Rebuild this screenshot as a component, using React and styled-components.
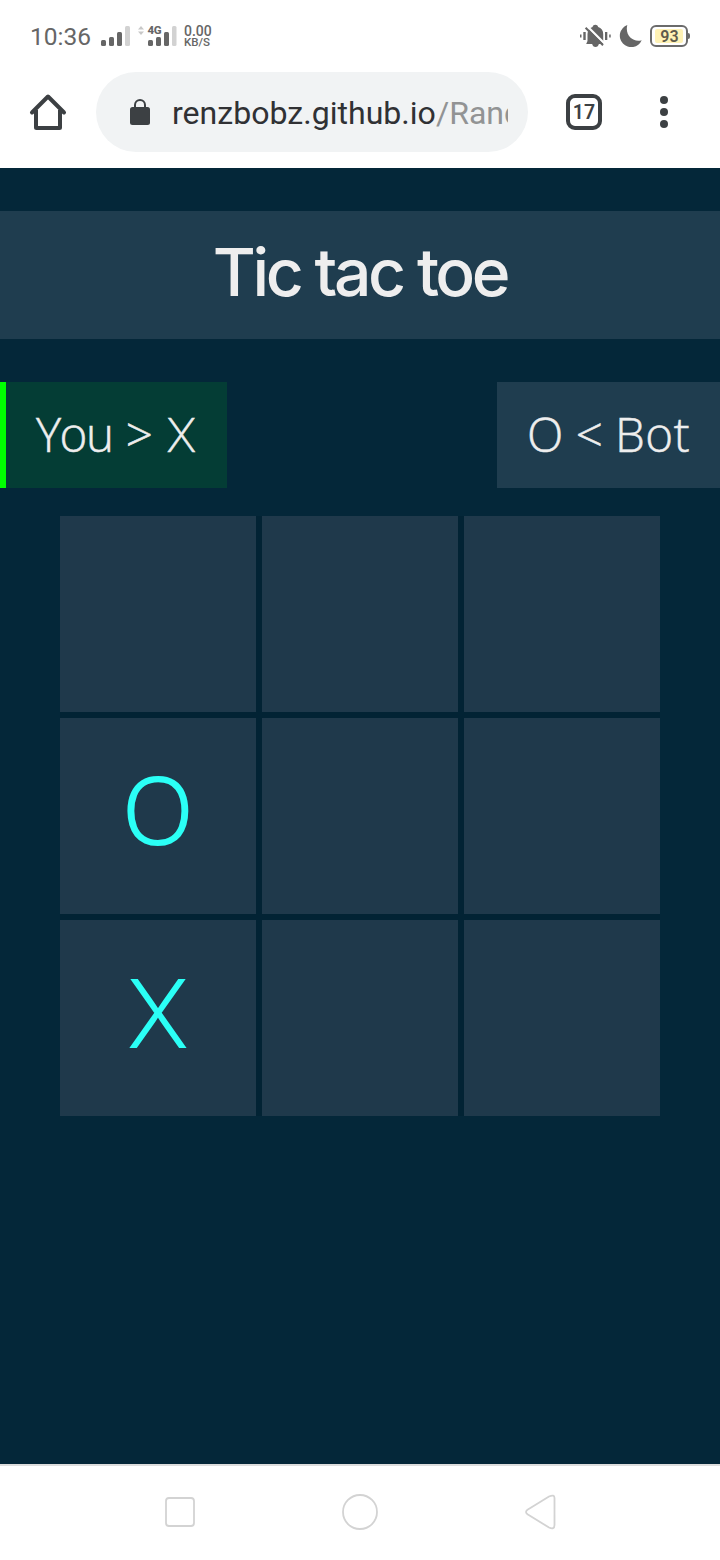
import React from "react";
import styled, { createGlobalStyle } from "styled-components";

const GlobalStyle = createGlobalStyle`
  * { box-sizing: border-box; }
  body { margin: 0; background: #fff; }
`;

const Phone = styled.div`
  width: 720px;
  height: 1560px;
  display: flex;
  flex-direction: column;
  overflow: hidden;
  background: #fff;
  font-family: Roboto, sans-serif;
`;

const StatusBar = styled.header`
  height: 72px;
  padding: 0 30px;
  display: flex;
  align-items: center;
  color: #666;
`;

const Clock = styled.span`
  width: 71px;
  font-size: 24.5px;
  line-height: 30px;
  padding-top: 2px;
`;

const SignalGroup = styled.div`
  display: flex;
  gap: 8px;
`;

const Speed = styled.div`
  display: flex;
  flex-direction: column;
  margin-left: 7px;
  font-weight: 500;
`;

const SpeedValue = styled.span`
  font-size: 14px;
  line-height: 12px;
`;

const SpeedUnit = styled.span`
  font-size: 11.5px;
  line-height: 11px;
`;

const StatusIcons = styled.div`
  margin-left: auto;
  display: flex;
  align-items: center;
  gap: 8px;
`;

const Battery = styled.div`
  display: flex;
  align-items: center;
`;

const BatteryBody = styled.div`
  width: 38px;
  height: 22px;
  padding: 2px;
  border: 2px solid #6b6b6b;
  border-radius: 6px;
`;

const BatteryLevel = styled.div`
  width: 28px;
  height: 14px;
  margin-left: 1px;
  padding-left: 1px;
  border-radius: 2px;
  background: #fff2b5;
  color: #5f5b4c;
  font-size: 16px;
  font-weight: 600;
  line-height: 15px;
  text-align: center;
`;

const BatteryTip = styled.div`
  width: 2px;
  height: 6px;
  border-radius: 0 2px 2px 0;
  background: #6b6b6b;
`;

const Toolbar = styled.div`
  height: 96px;
  padding: 0 51px 16px 28px;
  display: flex;
  align-items: center;
`;

const AddressBar = styled.div`
  width: 432px;
  height: 80px;
  margin-left: 28px;
  padding: 0 20px 0 34px;
  display: flex;
  align-items: center;
  border-radius: 40px;
  background: #f1f3f4;
`;

const Url = styled.div`
  flex: 1;
  margin-left: 22px;
  overflow: hidden;
  white-space: nowrap;
  color: #303134;
  font-size: 32.1px;
  line-height: 42px;
  padding-top: 1px;
`;

const UrlPath = styled.span`
  color: #929394;
`;

const TabCount = styled.div`
  width: 36px;
  height: 36px;
  margin-left: 38px;
  border: 4px solid #3c4043;
  border-radius: 9px;
  color: #3c4043;
  font-size: 19.5px;
  font-weight: 600;
  line-height: 29px;
  text-align: center;
`;

const Menu = styled.div`
  margin-left: auto;
  display: flex;
  flex-direction: column;
  gap: 4px;
  padding-right: 1px;
`;

const MenuDot = styled.i`
  width: 8px;
  height: 8px;
  border-radius: 50%;
  background: #3c4043;
`;

const Game = styled.main`
  height: 1296px;
  padding-top: 43px;
  background: #042739;
  color: #eee;
`;

const Title = styled.h1`
  height: 128px;
  margin: 0;
  background: #1f3d4f;
  font: 500 66px/122px Inter, sans-serif;
  letter-spacing: -3.4px;
  text-align: center;
`;

const Players = styled.div`
  display: flex;
  justify-content: space-between;
  margin-top: 43px;
`;

const Player = styled.div`
  width: ${(p) => (p.$active ? 227 : 223)}px;
  height: 106px;
  padding-left: 30px;
  border-left: ${(p) => (p.$active ? "6px solid #0f0" : "0")};
  background: ${(p) => (p.$active ? "#043d35" : "#1f3d4f")};
  font: 300 47.5px/103px "Open Sans", sans-serif;
  white-space: nowrap;
  word-spacing: ${(p) => (p.$active ? 1 : 0)}px;
  -webkit-text-stroke: 0.5px #eee;
`;

const PlayerName = styled.span`
  letter-spacing: ${(p) => p.$spacing}px;
`;

const CrossMark = styled.span`
  font-family: Inter, sans-serif;
  font-weight: 200;
  font-size: 47px;
  line-height: 1;
`;

const Board = styled.div`
  width: 600px;
  margin: 28px auto 0;
  display: grid;
  grid-template-columns: repeat(3, 196px);
  grid-auto-rows: 196px;
  gap: 6px;
  background: #022334;
`;

const Cell = styled.div`
  background: #1f394b;
  color: #2bfff6;
  font: 300 92px/182px "Open Sans", sans-serif;
  text-align: center;
  -webkit-text-stroke: 2px #2bfff6;
`;

const CrossCell = styled(Cell)`
  font: 200 92px/187px Inter, sans-serif;
`;

const NavBar = styled.nav`
  height: 96px;
  border-top: 2px solid #ddd;
  display: flex;
  justify-content: center;
  align-items: center;
  gap: 144px;
  padding-bottom: 2px;
`;

const SignalIcon = () => (
  <svg width="29" height="26" viewBox="0 0 29 26" fill="#666">
    <rect x="0" y="17" width="5" height="6" rx="1.5" />
    <rect x="8" y="14" width="5" height="9" rx="1.5" />
    <rect x="16" y="9" width="5" height="14" rx="1.5" />
    <rect x="24" y="3" width="5" height="20" rx="1.5" fill="#d2d2d2" />
  </svg>
);

const DataSignalIcon = () => (
  <svg width="39" height="26" viewBox="0 0 39 26" fill="#666">
    <path d="M0 6.500 3 3 6 6.500zM0 8.500h6L3 12z" fill="#c8c8c8" />
    <text x="9.500" y="11" fontFamily="Roboto" fontSize="11.500" fontWeight="800" textLength="14">4G</text>
    <rect x="10" y="17" width="5" height="6" rx="1.5" />
    <rect x="18" y="14" width="5" height="9" rx="1.5" />
    <rect x="26" y="9" width="5" height="14" rx="1.5" />
    <rect x="34" y="3" width="4.5" height="20" rx="1.5" fill="#d2d2d2" />
  </svg>
);

const MutedBellIcon = () => (
  <svg width="31" height="26" viewBox="0 0 31 26" fill="#666">
    <path d="M0 11.500h1.500v3H0zM3.300 9H5.700v8H3.300zM25 9h2.300v8H25zM29.200 11.500h1.500v3h-1.500z" />
    <path d="M7.500 18V11c0-3.500 2-6 5-7 .5-1.500 1.300-2.300 2.800-2.300s2.400.8 2.900 2.300c3 1 5 3.500 5 7v7l1.300 3H6.200z" />
    <path d="M12 20.500h7c-.5 2.500-1.800 3.500-3.500 3.500s-3-1-3.500-3.500z" />
    <path d="M7 3 25.500 21.500" stroke="#fff" strokeWidth="2.300" />
    <path d="M5.600 4.700 23 22.200" stroke="#666" strokeWidth="2" />
  </svg>
);

const MoonIcon = () => (
  <svg width="23" height="24" viewBox="0 0 23 24">
    <path d="M8.300 1A11.400 11.400 0 1 0 22.700 16.200C15 19 5.500 12 8.300 1z" fill="#666" />
  </svg>
);

const HomeIcon = () => (
  <svg width="40" height="40" viewBox="0 0 40 40" fill="none" stroke="#3c4043" strokeWidth="4">
    <path d="M4 20.500 20 4.500 36 20.500" strokeLinecap="round" strokeLinejoin="round" />
    <path d="M8 18V35.500Q8 36 8.500 36H31.500Q32 36 32 35.500V18" strokeLinejoin="round" />
  </svg>
);

const LockIcon = () => (
  <svg width="20" height="27" viewBox="0 0 20 27">
    <rect y="8" width="20" height="18" rx="2.500" fill="#3c4043" />
    <path d="M5 9V6a5 5 0 0 1 10 0v3" fill="none" stroke="#3c4043" strokeWidth="2" />
  </svg>
);

const NavIcon = ({ children }) => (
  <svg width="36" height="36" viewBox="0 0 36 36" fill="none" stroke="#d3d3d3" strokeWidth="1.800">
    {children}
  </svg>
);

const cells = ["", "", "", "O", "", "", "X", "", ""];

export default function App() {
  return (
    <Phone>
      <GlobalStyle />
      <StatusBar>
        <Clock>10:36</Clock>
        <SignalGroup>
          <SignalIcon />
          <DataSignalIcon />
        </SignalGroup>
        <Speed>
          <SpeedValue>0.00</SpeedValue>
          <SpeedUnit>KB/S</SpeedUnit>
        </Speed>
        <StatusIcons>
          <MutedBellIcon />
          <MoonIcon />
          <Battery>
            <BatteryBody><BatteryLevel>93</BatteryLevel></BatteryBody>
            <BatteryTip />
          </Battery>
        </StatusIcons>
      </StatusBar>
      <Toolbar>
        <HomeIcon />
        <AddressBar>
          <LockIcon />
          <Url>renzbobz.github.io<UrlPath>/Rand</UrlPath></Url>
        </AddressBar>
        <TabCount>17</TabCount>
        <Menu><MenuDot /><MenuDot /><MenuDot /></Menu>
      </Toolbar>
      <Game>
        <Title>Tic tac toe</Title>
        <Players>
          <Player $active><PlayerName $spacing={-1.5}>You</PlayerName> &gt; <CrossMark>X</CrossMark></Player>
          <Player>O &lt; <PlayerName $spacing={0.5}>Bot</PlayerName></Player>
        </Players>
        <Board>
          {cells.map((mark, i) =>
            mark === "X" ? <CrossCell key={i}>{mark}</CrossCell> : <Cell key={i}>{mark}</Cell>
          )}
        </Board>
      </Game>
      <NavBar>
        <NavIcon><rect x="4" y="4" width="28" height="28" rx="3" /></NavIcon>
        <NavIcon><circle cx="18" cy="18" r="17" /></NavIcon>
        <NavIcon><path d="M5.500 15.700 27 2.500Q32.500 0 32.500 4V31Q32.500 36 27 33.500L5.500 20.300Q2.500 18 5.500 15.700z" /></NavIcon>
      </NavBar>
    </Phone>
  );
}
